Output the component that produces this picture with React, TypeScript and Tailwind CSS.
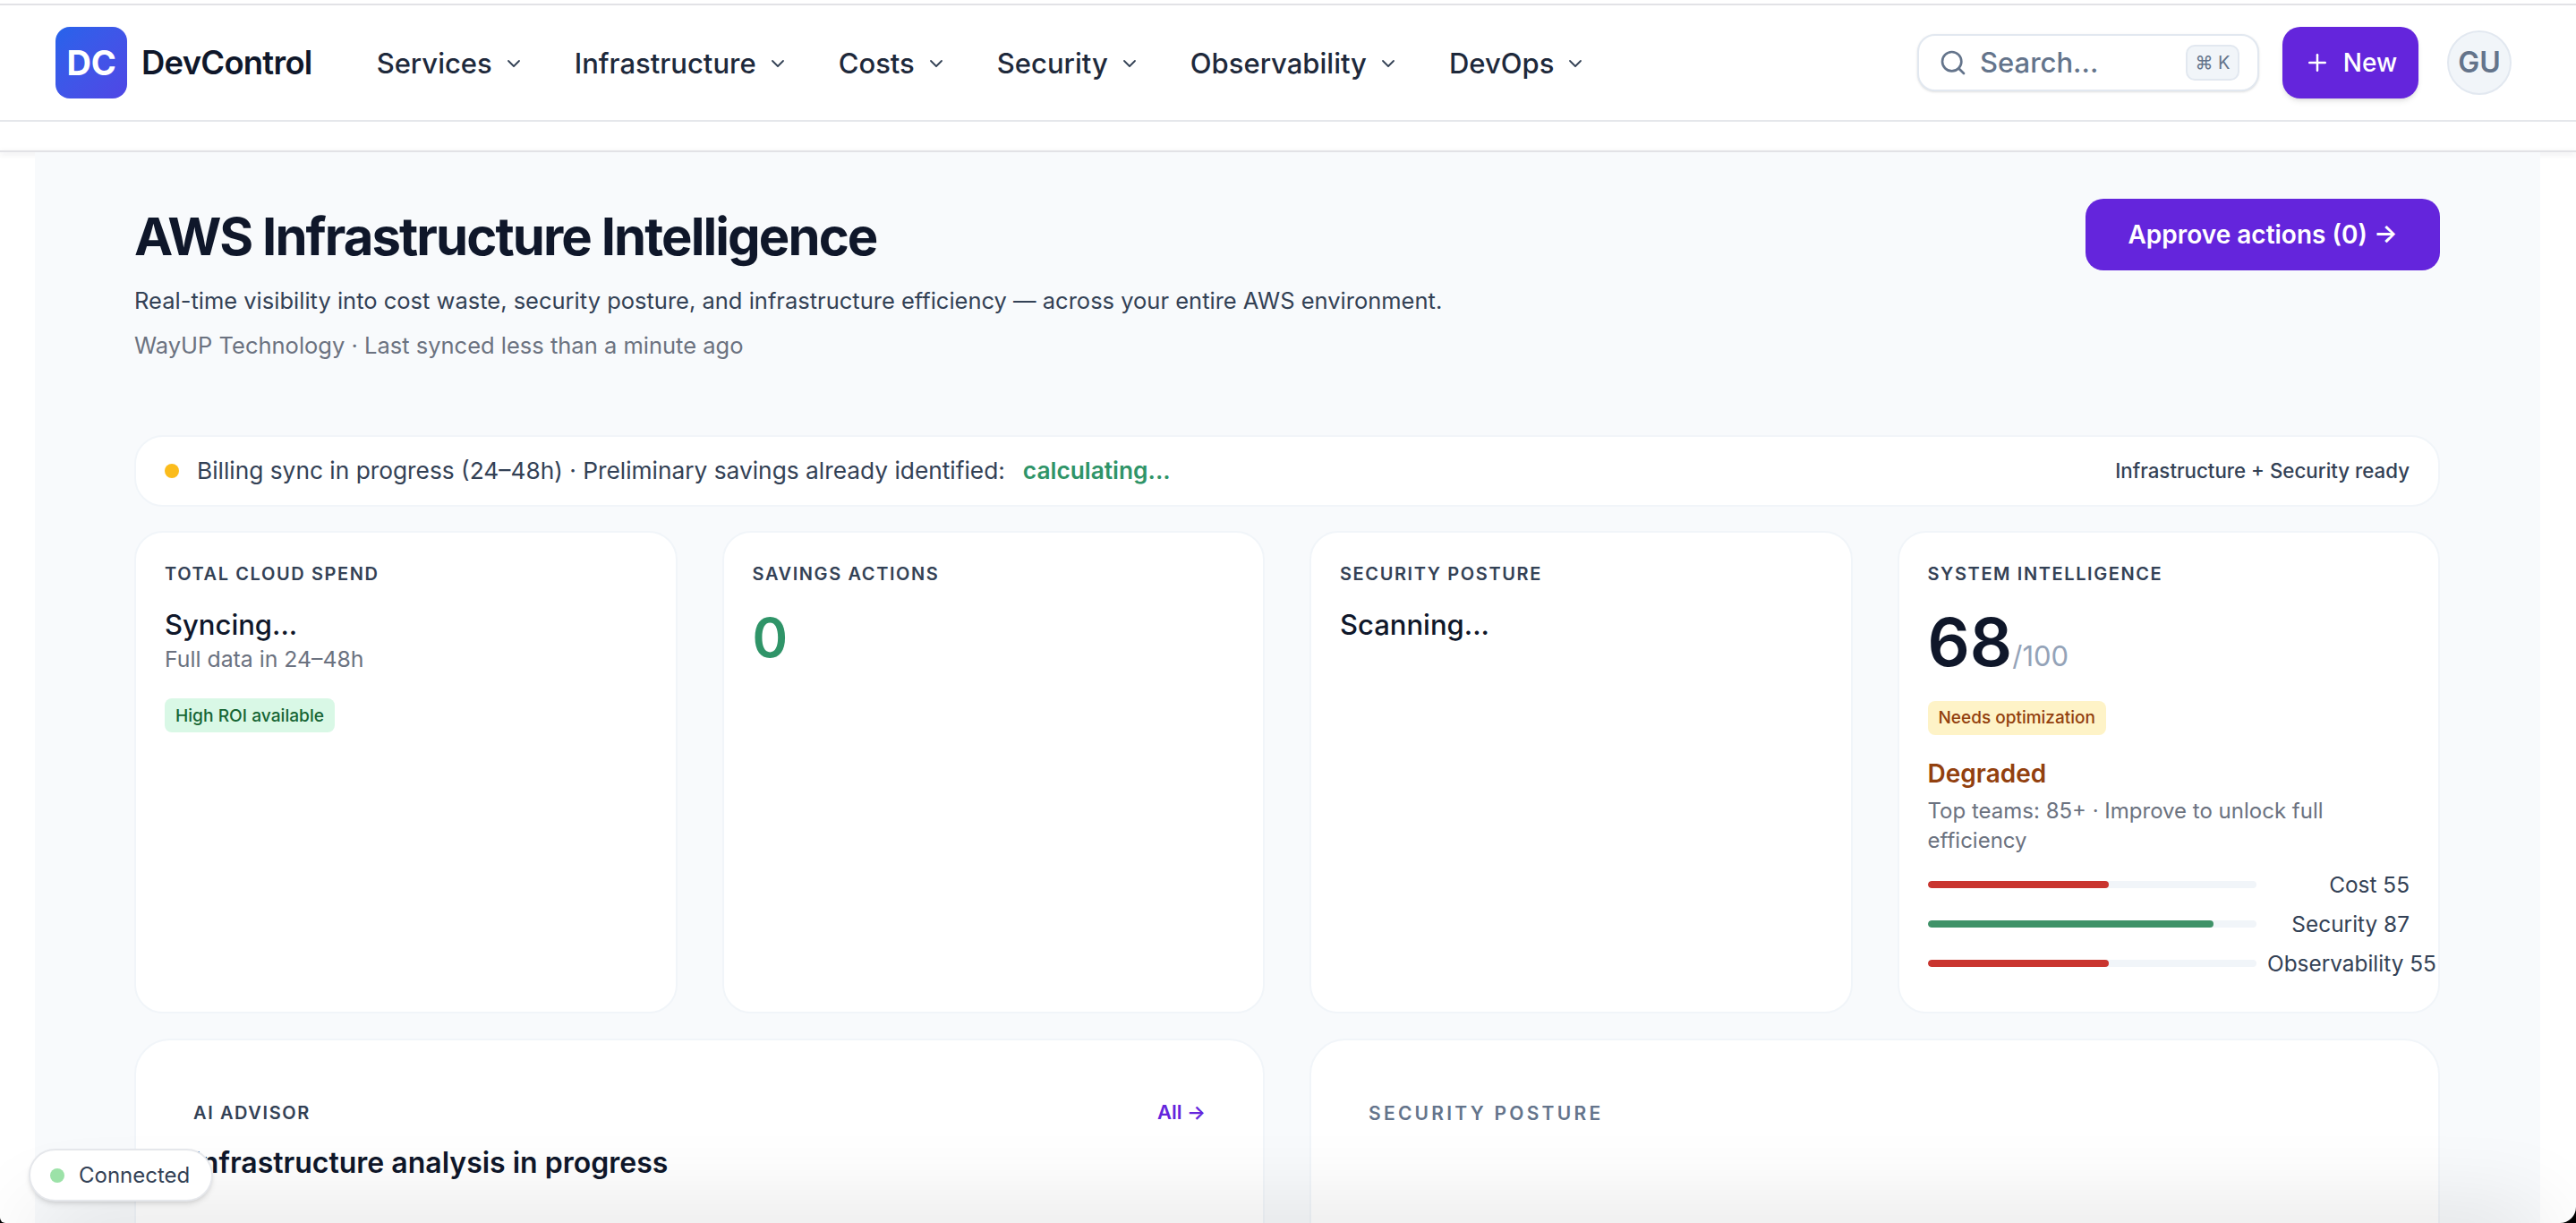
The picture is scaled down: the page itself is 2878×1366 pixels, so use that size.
import { ChevronDown, Plus, Search } from "lucide-react";

const navItems = ["Services", "Infrastructure", "Costs", "Security", "Observability", "DevOps"];

const labelClass = "text-[20px] leading-[28px] font-semibold tracking-[0.08em] uppercase text-[#334155]";
const cardClass = "bg-white border-2 border-[#f1f5f9] rounded-[32px]";

const Bar = ({ label, value, color }: { label: string; value: number; color: string }) => {
  return (
    <div className="flex items-center h-[44px]">
      <div className="w-[368px] h-[8px] rounded-full bg-[#f1f5f9] overflow-hidden">
        <div className={`h-full rounded-full ${color}`} style={{ width: `${value}%` }} />
      </div>
      <div className="w-[171px] pl-[12px] text-right whitespace-nowrap text-[24.4px] text-[#334155]">
        {label} {value}
      </div>
    </div>
  );
};

const Header = () => {
  return (
    <div className="shrink-0 bg-white">
      <div className="h-[4px]" />
      <div className="h-[2px] bg-[#e2e2e6]" />
      <header className="h-[128px] flex items-center pl-[62px] pr-[72px] border-b-2 border-[#e5e7eb] box-content">
        <div className="w-[80px] h-[80px] rounded-[16px] bg-gradient-to-br from-[#2563eb] to-[#4f46e5] flex items-center justify-center text-white text-[38px] font-bold tracking-[-0.01em]">
          DC
        </div>
        <div className="ml-[16px] text-[36.4px] font-semibold tracking-[-0.02em] text-[#0f172a]">DevControl</div>
        <nav className="ml-[72px] pt-[2px] flex items-center gap-[56px]">
          {navItems.map((item) => (
            <div key={item} className="flex items-center gap-[12px] text-[#1e293b] text-[31px] font-medium">
              {item}
              <ChevronDown size={24} strokeWidth={1.8} className="text-[#334155]" />
            </div>
          ))}
        </nav>
        <div className="ml-auto flex items-center">
          <div className="w-[382px] h-[64px] flex items-center bg-white border-2 border-[#e2e8f0] rounded-[20px] pl-[22px] pr-[20px] shadow-sm">
            <Search size={32} strokeWidth={2} className="text-[#64748b]" />
            <span className="ml-[14px] text-[31px] font-medium text-[#64748b]">Search...</span>
            <span className="ml-auto w-[60px] h-[40px] flex items-center justify-center rounded-[10px] bg-[#f1f5f9] border-2 border-[#e2e8f0] text-[20px] text-[#64748b]">
              ⌘ K
            </span>
          </div>
          <button className="ml-[26px] w-[152px] h-[80px] rounded-[20px] bg-[#6425dc] text-white text-[28px] font-medium flex items-center justify-center gap-[14px] shadow-md">
            <Plus size={30} strokeWidth={2} />
            New
          </button>
          <div className="ml-[32px] w-[72px] h-[72px] rounded-full bg-[#f1f5f9] border-2 border-[#e2e8f0] flex items-center justify-center text-[32px] font-semibold text-[#64748b]">
            GU
          </div>
        </div>
      </header>
      <div className="h-[32px]" />
      <div className="h-[2px] bg-[#e2e2e6] shadow-[0_2px_6px_rgba(15,23,42,0.15)]" />
    </div>
  );
};

const Main = () => {
  return (
    <main className="flex-1 ml-[39px] w-[2799px] bg-[#f8fafc] pl-[111px] pr-[112px] pt-[52px]">
      <div className="flex items-start justify-between">
        <div className="pt-[6px]">
          <h1 className="text-[58px] leading-[72px] font-bold tracking-[-0.033em] text-[#0f172a]">
            AWS Infrastructure Intelligence
          </h1>
          <p className="mt-[18px] text-[25.5px] leading-[36px] text-[#334155]">
            Real-time visibility into cost waste, security posture, and infrastructure efficiency — across your entire AWS environment.
          </p>
          <p className="mt-[14px] text-[25.5px] leading-[36px] text-[#6b7280]">
            WayUP Technology · Last synced less than a minute ago
          </p>
        </div>
        <button className="w-[396px] h-[80px] rounded-[20px] bg-[#6425dc] text-white text-[28px] font-semibold flex items-center justify-center">
          Approve actions (0) →
        </button>
      </div>

      <div className="mt-[82px] h-[80px] bg-white border-2 border-[#f1f5f9] rounded-[32px] flex items-center pl-[32px] pr-[32px]">
        <span className="w-[16px] h-[16px] rounded-full bg-[#fbbc1c]" />
        <span className="ml-[20px] text-[26.3px] text-[#334155]">
          Billing sync in progress (24–48h) · Preliminary savings already identified:
        </span>
        <span className="ml-[20px] text-[26.3px] font-semibold text-[#2f9468]">calculating...</span>
        <span className="ml-auto text-[22.3px] font-medium text-[#334155]">Infrastructure + Security ready</span>
      </div>

      <div className="mt-[27px] grid grid-cols-4 gap-[50px] h-[534px]">
        <div className={`${cardClass} p-[32px]`}>
          <div className={labelClass}>Total cloud spend</div>
          <div className="mt-[23px] text-[31px] leading-[40px] font-medium text-[#0f172a]">Syncing...</div>
          <div className="mt-[1px] text-[24.8px] leading-[34px] text-[#6b7280]">Full data in 24–48h</div>
          <span className="mt-[27px] block w-fit px-[12px] py-[6px] rounded-[8px] bg-[#d9f8e6] text-[#166534] text-[19.2px] leading-[26px] font-medium">
            High ROI available
          </span>
        </div>
        <div className={`${cardClass} p-[32px]`}>
          <div className={labelClass}>Savings actions</div>
          <div className="mt-[21px] text-[60px] leading-[72px] font-semibold text-[#2f9468]">0</div>
        </div>
        <div className={`${cardClass} p-[32px]`}>
          <div className={labelClass}>Security posture</div>
          <div className="mt-[23px] text-[31px] leading-[40px] font-medium text-[#0f172a]">Scanning...</div>
        </div>
        <div className={`${cardClass} p-[32px]`}>
          <div className={labelClass}>System intelligence</div>
          <div className="mt-[18px] flex items-baseline">
            <span className="text-[74px] leading-[88px] font-semibold text-[#0f172a]">68</span>
            <span className="text-[31px] text-[#94a3b8]">/100</span>
          </div>
          <span className="mt-[22px] block w-fit px-[12px] py-[6px] rounded-[8px] bg-[#fef3c7] text-[#92400e] text-[19px] leading-[26px] font-medium">
            Needs optimization
          </span>
          <div className="mt-[23px] text-[28px] leading-[40px] font-semibold text-[#92400e]">Degraded</div>
          <div className="mt-[5px] text-[24px] leading-[33px] text-[#6b7280]">
            Top teams: 85+ · Improve to unlock full efficiency
          </div>
          <div className="mt-[11px]">
            <Bar label="Cost" value={55} color="bg-[#c9352f]" />
            <Bar label="Security" value={87} color="bg-[#3f9268]" />
            <Bar label="Observability" value={55} color="bg-[#c9352f]" />
          </div>
        </div>
      </div>

      <div className="mt-[33px] grid grid-cols-2 gap-[50px] h-[400px]">
        <div className="bg-white border-2 border-[#f1f5f9] rounded-[40px] px-[64px] pt-[64px]">
          <div className="flex items-center justify-between">
            <div className={labelClass}>AI Advisor</div>
            <div className="text-[22px] font-semibold text-[#6425dc]">All →</div>
          </div>
          <div className="mt-[18px] text-[32px] leading-[44px] font-semibold text-[#0f172a]">
            Infrastructure analysis in progress
          </div>
        </div>
        <div className="bg-white border-2 border-[#f1f5f9] rounded-[40px] px-[64px] pt-[68px]">
          <div className="text-[21px] leading-[28px] font-semibold tracking-[0.155em] uppercase text-[#64748b]">
            Security posture
          </div>
        </div>
      </div>
    </main>
  );
};

export default function App() {
  return (
    <div className="bg-black w-[2878px] h-[1366px] overflow-hidden" style={{ fontFamily: "Inter, sans-serif" }}>
      <div className="relative w-full h-full bg-white rounded-bl-[6px] rounded-br-[18px] overflow-hidden flex flex-col">
        <Header />
        <Main />
        <div className="absolute left-[40px] right-[40px] top-[1366px] h-[40px] shadow-[0_0_100px_rgba(0,0,0,0.2)]" />
        <div className="absolute left-[32px] top-[1283px] w-[206px] h-[59px] rounded-full bg-white border-2 border-[#e5e7eb] shadow-md flex items-center pl-[22px]">
          <span className="w-[16px] h-[16px] rounded-full bg-[#9ce2a8]" />
          <span className="ml-[16px] text-[24px] text-[#334155]">Connected</span>
        </div>
      </div>
    </div>
  );
}
